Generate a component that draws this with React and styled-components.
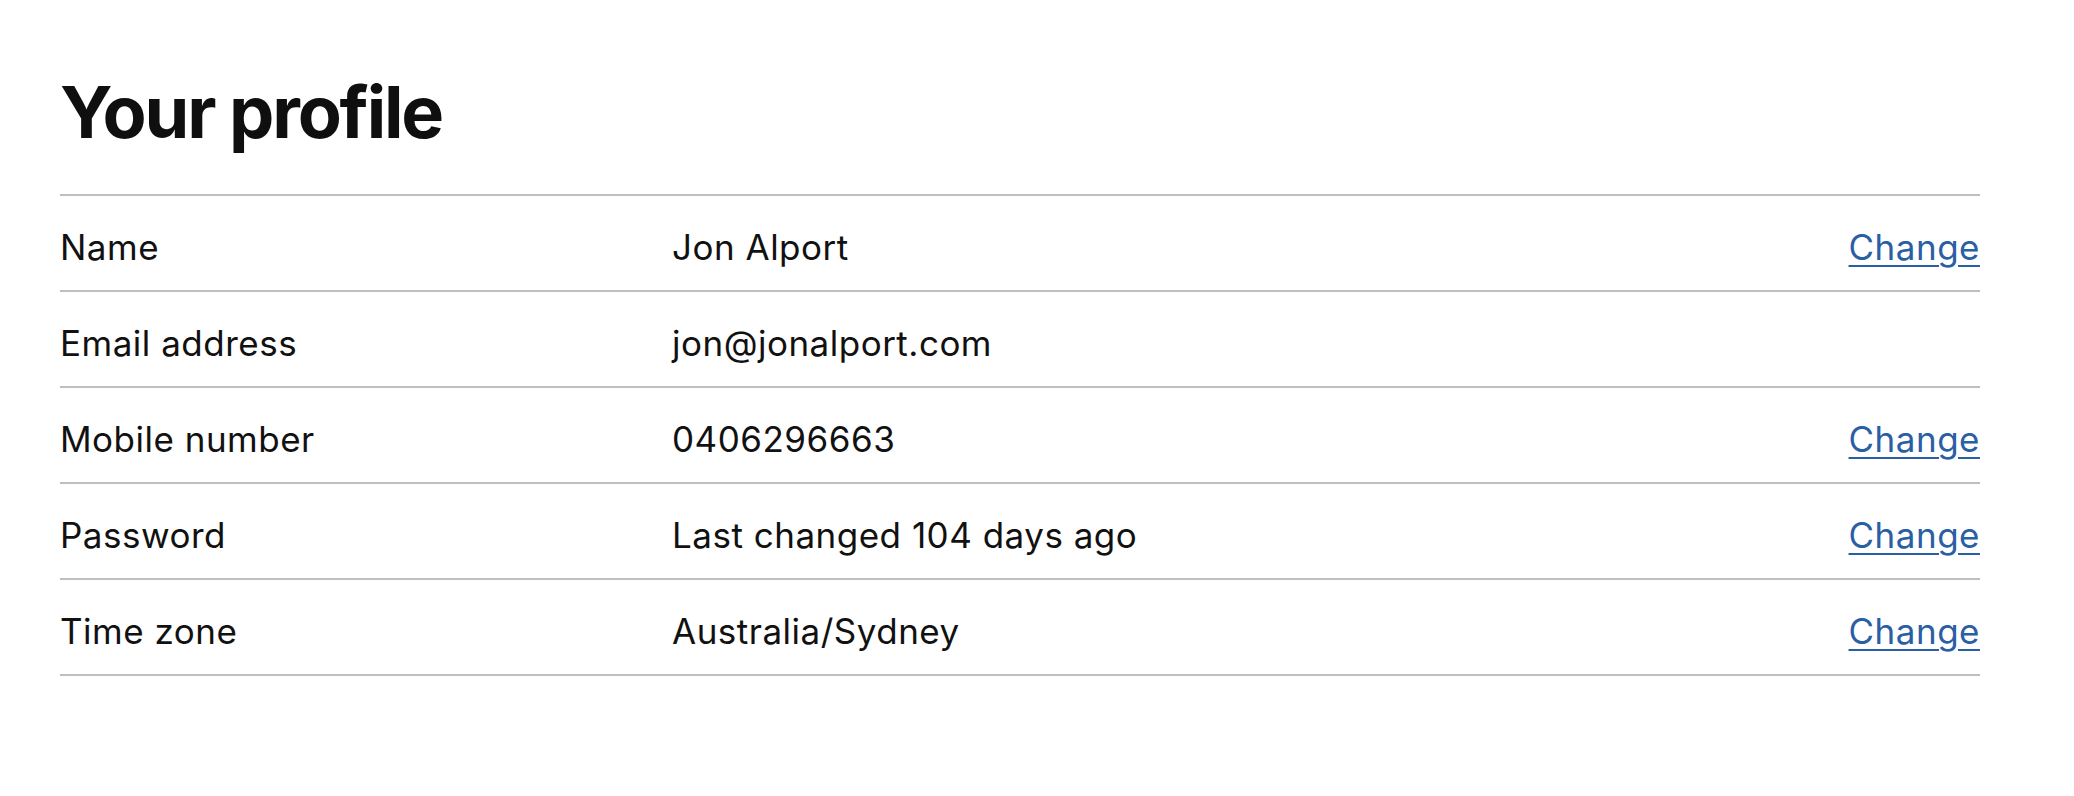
import React from 'react';
import styled, { createGlobalStyle } from 'styled-components';

const GlobalStyle = createGlobalStyle`
  body {
    margin: 0;
    background: #ffffff;
    font-family: Inter, 'Noto Sans', sans-serif;
    color: #111111;
  }
`;

const Page = styled.div`
  padding: 69px 94px 0 60px;
`;

const Title = styled.h1`
  margin: 0 0 39px;
  font-size: 72px;
  line-height: 86px;
  font-weight: 700;
  letter-spacing: -2.2px;
  color: #0e0f0e;
`;

const Table = styled.div`
  border-top: 2px solid #bfbfbf;
`;

// 한 줄: 라벨 / 값 / 변경 링크
const Row = styled.div`
  display: grid;
  grid-template-columns: 612px 1fr auto;
  align-items: center;
  box-sizing: border-box;
  height: 96px;
  padding-top: 7px;
  border-bottom: 2px solid #bfbfbf;
  font-size: 35px;
  letter-spacing: 0.5px;
`;

const Label = styled.div`
  color: #111111;
`;

const Value = styled.div`
  color: #111111;
`;

const ChangeLink = styled.a`
  color: #2a5ea5;
  text-decoration: underline;
  text-underline-offset: 5px;
  text-decoration-thickness: 2px;
  cursor: pointer;
`;

const rows = [
  { label: 'Name', value: 'Jon Alport', change: true },
  { label: 'Email address', value: 'jon@jonalport.com', change: false },
  { label: 'Mobile number', value: '0406296663', change: true },
  { label: 'Password', value: 'Last changed 104 days ago', change: true },
  { label: 'Time zone', value: 'Australia/Sydney', change: true },
];

const App = () => {
  return (
    <>
      <GlobalStyle />
      <Page>
        <Title>Your profile</Title>
        <Table>
          {rows.map((r) => (
            <Row key={r.label}>
              <Label>{r.label}</Label>
              <Value>{r.value}</Value>
              {r.change ? <ChangeLink href="#">Change</ChangeLink> : <span />}
            </Row>
          ))}
        </Table>
      </Page>
    </>
  );
};

export default App;
